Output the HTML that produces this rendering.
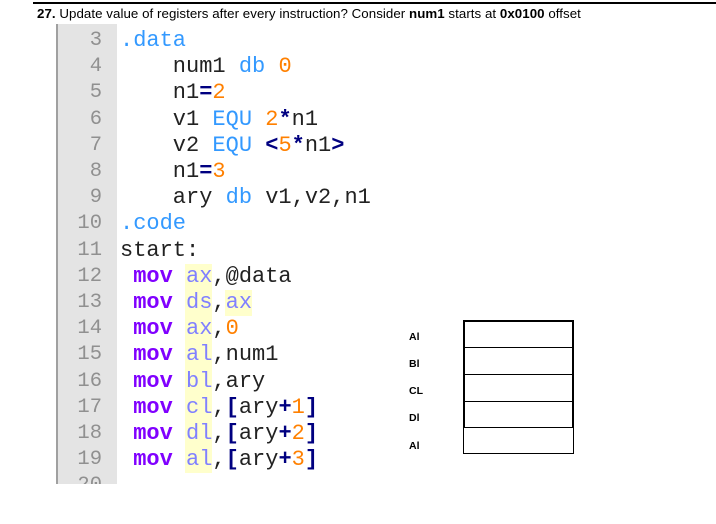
<!DOCTYPE html>
<html><head><meta charset="utf-8"><style>
body{margin:0;width:716px;height:524px;background:#fff;position:relative;overflow:hidden;font-family:"Liberation Sans",sans-serif}
.topline{position:absolute;left:33px;top:2px;width:683px;height:2px;background:#000}
.title{position:absolute;left:37px;top:6px;font-size:13.3px;color:#000;white-space:nowrap;letter-spacing:0.05px}
.gut{position:absolute;left:56px;top:24px;width:2px;height:460px;background:#a0a0a0}
.gbg{position:absolute;left:58px;top:24px;width:59px;height:460px;background:#e4e4e4}
.hl{position:absolute;background:#ffffcc}
.ln{position:absolute;left:58px;width:44px;text-align:right;color:#909090;font-family:"Liberation Mono",monospace;font-size:20.5px}
.l{position:absolute;left:120px;color:#222;font-family:"Liberation Mono",monospace;font-size:22px;white-space:pre}
.b{color:#3399ff}.o{color:#ff8000}.n{color:#000080;font-weight:bold}.m{color:#8000ff;font-weight:bold}.r{color:#8080ff}
.lab{position:absolute;left:409px;font-size:10.5px;font-weight:bold}
.tb{position:absolute;left:463px;width:111px;border:1px solid #000;box-sizing:border-box}
</style></head><body>
<div class="topline"></div>
<div class="title"><b>27.</b> Update value of registers after every instruction? Consider <b>num1</b> starts at <b>0x0100</b> offset</div>
<div class="gbg"></div><div class="gut"></div>
<div class="hl" style="left:185px;top:264px;width:27px;height:209px"></div>
<div class="hl" style="left:225px;top:290px;width:27px;height:26px"></div>
<div style="position:absolute;left:0;top:28px;line-height:26.2px">
<div class="ln" style="top:0">3</div><div class="l" style="top:0"><span class="b">.data</span></div>
<div class="ln" style="top:26.2px">4</div><div class="l" style="top:26.2px">    num1 <span class="b">db</span> <span class="o">0</span></div>
<div class="ln" style="top:52.4px">5</div><div class="l" style="top:52.4px">    n1<span class="n">=</span><span class="o">2</span></div>
<div class="ln" style="top:78.6px">6</div><div class="l" style="top:78.6px">    v1 <span class="b">EQU</span> <span class="o">2</span><span class="n">*</span>n1</div>
<div class="ln" style="top:104.8px">7</div><div class="l" style="top:104.8px">    v2 <span class="b">EQU</span> <span class="n">&lt;</span><span class="o">5</span><span class="n">*</span>n1<span class="n">&gt;</span></div>
<div class="ln" style="top:131px">8</div><div class="l" style="top:131px">    n1<span class="n">=</span><span class="o">3</span></div>
<div class="ln" style="top:157.2px">9</div><div class="l" style="top:157.2px">    ary <span class="b">db</span> v1,v2,n1</div>
<div class="ln" style="top:183.4px">10</div><div class="l" style="top:183.4px"><span class="b">.code</span></div>
<div class="ln" style="top:209.6px">11</div><div class="l" style="top:209.6px">start:</div>
<div class="ln" style="top:235.8px">12</div><div class="l" style="top:235.8px"> <span class="m">mov</span> <span class="r">ax</span>,@data</div>
<div class="ln" style="top:262px">13</div><div class="l" style="top:262px"> <span class="m">mov</span> <span class="r">ds</span>,<span class="r">ax</span></div>
<div class="ln" style="top:288.2px">14</div><div class="l" style="top:288.2px"> <span class="m">mov</span> <span class="r">ax</span>,<span class="o">0</span></div>
<div class="ln" style="top:314.4px">15</div><div class="l" style="top:314.4px"> <span class="m">mov</span> <span class="r">al</span>,num1</div>
<div class="ln" style="top:340.6px">16</div><div class="l" style="top:340.6px"> <span class="m">mov</span> <span class="r">bl</span>,ary</div>
<div class="ln" style="top:366.8px">17</div><div class="l" style="top:366.8px"> <span class="m">mov</span> <span class="r">cl</span>,<span class="n">[</span>ary<span class="n">+</span><span class="o">1</span><span class="n">]</span></div>
<div class="ln" style="top:393px">18</div><div class="l" style="top:393px"> <span class="m">mov</span> <span class="r">dl</span>,<span class="n">[</span>ary<span class="n">+</span><span class="o">2</span><span class="n">]</span></div>
<div class="ln" style="top:419.2px">19</div><div class="l" style="top:419.2px"> <span class="m">mov</span> <span class="r">al</span>,<span class="n">[</span>ary<span class="n">+</span><span class="o">3</span><span class="n">]</span></div>
<div class="ln" style="top:445.4px">20</div>
</div>
<div style="position:absolute;left:0;top:484px;width:716px;height:40px;background:#fff"></div>
<div class="lab" style="top:331px">Al</div>
<div class="lab" style="top:358px">Bl</div>
<div class="lab" style="top:385px">CL</div>
<div class="lab" style="top:412px">Dl</div>
<div class="lab" style="top:440px">Al</div>
<div class="tb" style="top:320px;height:28px;border-width:2px 2px 1px 2px"></div>
<div class="tb" style="top:347px;height:28px;border-width:1px 2px 1px 2px"></div>
<div class="tb" style="top:374px;height:28px;border-width:1px 2px 1px 2px"></div>
<div class="tb" style="top:401px;height:27px;border-width:1px 2px 1px 2px"></div>
<div class="tb" style="top:427px;height:27px"></div>
</body></html>
